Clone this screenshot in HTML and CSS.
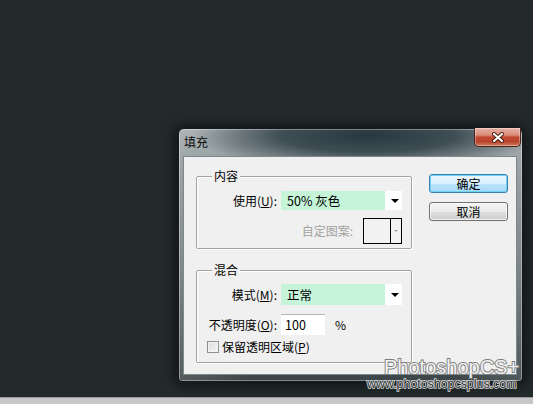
FILE: index.html
```html
<!DOCTYPE html>
<html lang="zh">
<head>
<meta charset="utf-8">
<title>填充</title>
<link rel="stylesheet" href="styles.css">
</head>
<body>
<div class="desktop">
  <div class="window">
    <div class="titlebar">
      <span class="title">填充</span>
      <div class="close">
        <svg width="14" height="11" viewBox="0 0 14 11"><path d="M3 2 L11 9 M11 2 L3 9" stroke="#4a1a10" stroke-width="4" stroke-linecap="round"/><path d="M3 2 L11 9 M11 2 L3 9" stroke="#ffffff" stroke-width="2.2" stroke-linecap="round"/></svg>
      </div>
    </div>
    <div class="client">
      <div class="groups">
        <div class="group g1">
          <span class="legend">内容</span>
          <div class="row">
            <span class="lbl">使用(<u>U</u>):</span>
            <div class="select s1"><span class="val">50% 灰色</span><span class="arrow"><i class="tri"></i></span></div>
          </div>
          <div class="row pattern-row">
            <span class="lbl-dis">自定图案:</span>
            <div class="pattern"><span class="swatch"></span><span class="parrow"><i class="tri-dis"></i></span></div>
          </div>
        </div>
        <div class="group g2">
          <span class="legend">混合</span>
          <div class="row">
            <span class="lbl">模式(<u>M</u>):</span>
            <div class="select s2"><span class="val">正常</span><span class="arrow"><i class="tri"></i></span></div>
          </div>
          <div class="row opacity-row">
            <span class="lbl">不透明度(<u>O</u>):</span>
            <div class="input">100</div>
            <span class="pct">%</span>
          </div>
          <div class="row check-row">
            <span class="checkbox"></span>
            <span class="check-lbl">保留透明区域(<u>P</u>)</span>
          </div>
        </div>
      </div>
      <div class="buttons">
        <div class="btn btn-default">确定</div>
        <div class="btn">取消</div>
      </div>
    </div>
  </div>
  <div class="wm wm-big">PhotoshopCS+</div>
  <div class="wm wm-small">www.photoshopcsplus.com</div>
</div>
<div class="strip"></div>
</body>
</html>
```
FILE: styles.css
```css
html, body {
  margin: 0;
  padding: 0;
}
body {
  width: 533px;
  height: 404px;
  overflow: hidden;
  background: #222a2b;
  font-family: "Noto Sans CJK SC", "Liberation Sans", sans-serif;
  font-size: 12px;
  color: #000;
}
.desktop {
  position: relative;
  height: 397px;
  box-sizing: border-box;
  padding: 128px 0 0 178px;
}
.strip {
  height: 7px;
  background: #c7c7c7;
  border-top: 1px solid #9a9a9a;
  box-sizing: border-box;
}
.window {
  width: 345px;
  height: 254px;
  box-sizing: border-box;
  border: 1px solid #161c1d;
  border-radius: 6px 6px 4px 4px;
  background:
    radial-gradient(ellipse 175px 34px at 55% 6px, rgba(36,52,60,0.97) 0%, rgba(40,56,64,0.8) 50%, rgba(40,58,66,0) 100%),
    linear-gradient(to right, rgba(255,255,255,0.12) 0%, rgba(255,255,255,0) 20%, rgba(0,0,0,0) 80%, rgba(255,255,255,0.1) 100%),
    linear-gradient(to bottom, #a2aaac 0px, #8d9698 40px, #6e787b 55%, #3c4648 100%);
  box-shadow: 0 0 12px 3px rgba(0,0,0,0.55), inset 0 0 0 1px rgba(255,255,255,0.35);
  display: flex;
  flex-direction: column;
}
.titlebar {
  height: 27px;
  display: flex;
  align-items: flex-start;
}
.title {
  margin: 6px 0 0 5px;
  line-height: 14px;
  font-size: 12px;
  color: #0a0a0a;
}
.close {
  margin: -1px 1px 0 auto;
  width: 47px;
  height: 19px;
  box-sizing: border-box;
  border: 1px solid #4b2219;
  border-top: none;
  border-radius: 0 0 5px 5px;
  background: linear-gradient(to bottom, #e8b2a4 0%, #d88a78 40%, #c24a31 50%, #b8432c 75%, #d07a5c 100%);
  box-shadow: inset 0 0 0 1px rgba(255,255,255,0.35);
  display: flex;
  align-items: center;
  justify-content: center;
}
.client {
  margin-left: 4px;
  width: 334px;
  height: 219px;
  box-sizing: border-box;
  border: 1px solid #7d888b;
  background: #f0f0f0;
  display: flex;
  align-items: flex-start;
  padding: 17px 0 0 12px;
}
.groups {
  margin-top: 2px;
  display: flex;
  flex-direction: column;
  gap: 21px;
}
.group {
  position: relative;
  width: 216px;
  box-sizing: border-box;
  border: 1px solid #a3a3a3;
  border-radius: 2px;
  box-shadow: inset 1px 1px 0 #fff, 1px 1px 0 #fff;
}
.g1 { padding: 14px 9px 4px 8px; }
.g2 { padding: 13px 9px 7px 8px; }
.legend {
  position: absolute;
  top: -8px;
  left: 15px;
  padding: 0 2px;
  background: #f0f0f0;
  line-height: 14px;
  font-size: 12px;
}
.row {
  display: flex;
  align-items: center;
}
.lbl {
  width: 72px;
  margin-right: 4px;
  text-align: right;
  white-space: nowrap;
  line-height: 14px;
}
u { text-decoration: underline; text-underline-offset: 1px; }
.select {
  width: 121px;
  display: flex;
  box-sizing: border-box;
}
.s1 { height: 19px; }
.s2 { height: 21px; }
.select .val {
  flex: 1;
  background: #c6f4d8;
  padding-left: 6px;
  display: flex;
  align-items: center;
  font-size: 12.5px;
}
.select .arrow {
  width: 17px;
  background: #fff;
  display: flex;
  align-items: center;
  justify-content: center;
}
.tri {
  width: 0;
  height: 0;
  border-left: 4px solid transparent;
  border-right: 4px solid transparent;
  border-top: 4px solid #000;
  margin-left: 2px;
}
.pattern-row {
  justify-content: flex-end;
  margin-top: 8px;
}
.lbl-dis {
  color: #a3a3a3;
  margin-right: 10px;
  line-height: 14px;
}
.pattern {
  width: 39px;
  height: 26px;
  box-sizing: border-box;
  border: 1px solid #000;
  display: flex;
  background: #f2f2f2;
}
.swatch {
  width: 26px;
  border-right: 1px solid #000;
}
.parrow {
  flex: 1;
  display: flex;
  align-items: center;
  justify-content: center;
}
.tri-dis {
  width: 0;
  height: 0;
  border-left: 2px solid transparent;
  border-right: 2px solid transparent;
  border-top: 2px solid #a0a0a0;
}
.opacity-row { margin-top: 9px; }
.input {
  width: 44px;
  height: 21px;
  box-sizing: border-box;
  background: #fff;
  border-top: 1px solid #b5b5b5;
  padding-left: 4px;
  line-height: 20px;
  font-size: 12.5px;
}
.pct {
  margin-left: 10px;
  line-height: 14px;
}
.check-row {
  margin-top: 4px;
  height: 16px;
}
.checkbox {
  width: 12px;
  height: 12px;
  box-sizing: border-box;
  margin-left: 2px;
  border: 1px solid #8e8f8f;
  background: linear-gradient(135deg, #dcdcdc, #f6f6f6);
  box-shadow: inset 0 0 0 1px #f4f4f4;
}
.check-lbl {
  margin-left: 3px;
  line-height: 14px;
}
.buttons {
  margin-left: 17px;
  display: flex;
  flex-direction: column;
  gap: 9px;
}
.btn {
  width: 79px;
  height: 19px;
  box-sizing: border-box;
  border: 1px solid #707070;
  border-radius: 3px;
  background: linear-gradient(to bottom, #f3f3f3 0%, #ebebeb 50%, #dddddd 51%, #cfcfcf 100%);
  box-shadow: inset 0 0 0 1px rgba(255,255,255,0.7);
  display: flex;
  align-items: center;
  justify-content: center;
  line-height: 14px;
}
.btn-default {
  border-color: #3c7fb1;
  background: linear-gradient(to bottom, #eaf6fd 0%, #d9f0fc 50%, #bee6fd 51%, #a7d9f5 100%);
  box-shadow: inset 0 0 0 1px #6fd2f7;
}
.wm {
  position: absolute;
  font-family: "Liberation Sans", Arial, sans-serif;
  white-space: nowrap;
  paint-order: stroke fill;
}
.wm-big {
  left: 384px;
  top: 357px;
  font-size: 20px;
  line-height: 20px;
  color: #f2f2f2;
  -webkit-text-stroke: 1.8px #7c7c7c;
}
.wm-small {
  left: 367px;
  top: 378px;
  font-size: 12.4px;
  line-height: 13px;
  color: #2b3334;
  -webkit-text-stroke: 1.6px #d8d8d8;
}
```
